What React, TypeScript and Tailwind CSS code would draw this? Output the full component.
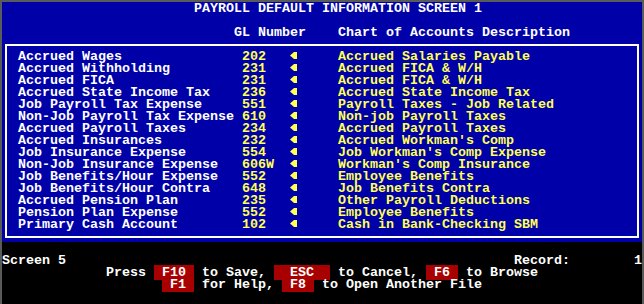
import React from 'react';

interface Account {
  label: string;
  gl: string;
  desc: string;
}

const accounts: Account[] = [
  { label: 'Accrued Wages', gl: '202', desc: 'Accrued Salaries Payable' },
  { label: 'Accrued Withholding', gl: '231', desc: 'Accrued FICA & W/H' },
  { label: 'Accrued FICA', gl: '231', desc: 'Accrued FICA & W/H' },
  { label: 'Accrued State Income Tax', gl: '236', desc: 'Accrued State Income Tax' },
  { label: 'Job Payroll Tax Expense', gl: '551', desc: 'Payroll Taxes - Job Related' },
  { label: 'Non-Job Payroll Tax Expense', gl: '610', desc: 'Non-job Payroll Taxes' },
  { label: 'Accrued Payroll Taxes', gl: '234', desc: 'Accrued Payroll Taxes' },
  { label: 'Accrued Insurances', gl: '232', desc: "Accrued Workman's Comp" },
  { label: 'Job Insurance Expense', gl: '554', desc: "Job Workman's Comp Expense" },
  { label: 'Non-Job Insurance Expense', gl: '606W', desc: "Workman's Comp Insurance" },
  { label: 'Job Benefits/Hour Expense', gl: '552', desc: 'Employee Benefits' },
  { label: 'Job Benefits/Hour Contra', gl: '648', desc: 'Job Benefits Contra' },
  { label: 'Accrued Pension Plan', gl: '235', desc: 'Other Payroll Deductions' },
  { label: 'Pension Plan Expense', gl: '552', desc: 'Employee Benefits' },
  { label: 'Primary Cash Account', gl: '102', desc: 'Cash in Bank-Checking SBM' },
];

const sp = (n: number) => ' '.repeat(n);

// small left-pointing marker used by the DOS form
const Pointer = () => (
  <svg width="8" height="12" viewBox="0 0 8 12" className="inline-block align-top">
    <polygon points="0,4.5 4,1 7,1 7,8 4,8" fill="#ffff55" />
  </svg>
);

const Key = ({ children }: { children: React.ReactNode }) => (
  <span className="bg-[#a80000] text-white">{children}</span>
);

const Line = ({ children }: { children?: React.ReactNode }) => (
  <div className="h-[12px] whitespace-pre">{children}</div>
);

export default function App() {
  return (
    <div className="w-[644px] h-[304px] bg-black border-l-2 border-t-2 border-r-2 border-[#5a5a5a] font-['Liberation_Mono',monospace] font-bold text-[13.333px] leading-[12px] text-white overflow-hidden">
      <div className="h-[240px] bg-[#0000a8] pt-[1px]">
        <Line>{sp(24)}PAYROLL DEFAULT INFORMATION SCREEN 1</Line>
        <Line />
        <Line>
          {sp(29)}GL Number{sp(4)}Chart of Accounts Description
        </Line>
        <div className="mt-[5px] ml-[3px] w-[634px] border-2 border-white pt-[5px] pb-[5px] pl-[11px]">
          {accounts.map((a, i) => (
            <Line key={i}>
              {a.label.padEnd(28, ' ')}
              <span className="text-[#ffff55]">{a.gl.padEnd(6, ' ')}</span>
              <Pointer />
              <span className="text-[#ffff55]">
                {sp(5)}
                {a.desc}
              </span>
            </Line>
          ))}
        </div>
      </div>
      <div className="pt-[1px]">
        <Line />
        <Line>
          Screen 5{sp(56)}Record:{sp(8)}1
        </Line>
        <Line>
          {sp(13)}Press{sp(1)}
          <Key> F10 </Key> to Save, <Key>  ESC  </Key> to Cancel, <Key> F6 </Key> to Browse
        </Line>
        <Line>
          {sp(20)}
          <Key> F1 </Key> for Help, <Key> F8 </Key> to Open Another File
        </Line>
      </div>
    </div>
  );
}
